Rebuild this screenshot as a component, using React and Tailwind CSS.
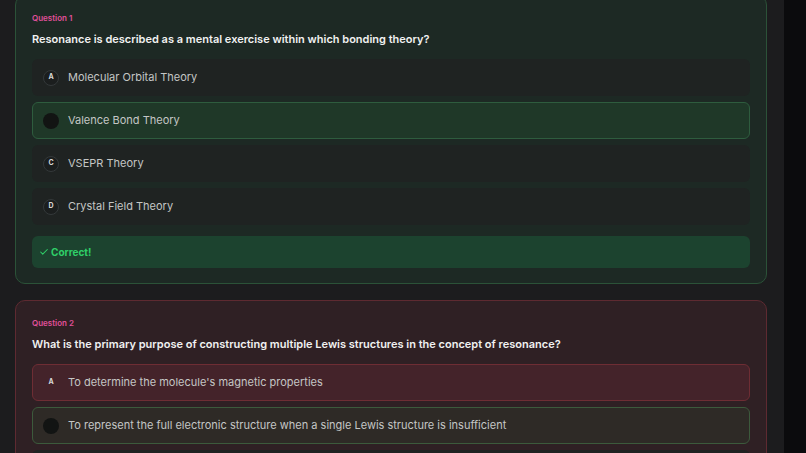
import { Check } from 'lucide-react';

const quiz = [
  {
    id: 1,
    status: 'correct',
    question: 'Resonance is described as a mental exercise within which bonding theory?',
    options: [
      { key: 'A', text: 'Molecular Orbital Theory', state: 'idle' },
      { key: 'B', text: 'Valence Bond Theory', state: 'right' },
      { key: 'C', text: 'VSEPR Theory', state: 'idle' },
      { key: 'D', text: 'Crystal Field Theory', state: 'idle' },
    ],
  },
  {
    id: 2,
    status: 'wrong',
    question:
      'What is the primary purpose of constructing multiple Lewis structures in the concept of resonance?',
    options: [
      { key: 'A', text: "To determine the molecule's magnetic properties", state: 'picked' },
      {
        key: 'B',
        text: 'To represent the full electronic structure when a single Lewis structure is insufficient',
        state: 'answer',
      },
      { key: 'C', text: 'To show the movement of atoms between forms', state: 'idle' },
    ],
  },
];

function Option({ opt }) {
  const box = {
    idle: 'border-transparent bg-[#1f2322]',
    right: 'border-[#2e5c3e] bg-[#1f3828]',
    picked: 'border-[#6e2d34] bg-[#44232a]',
    answer: 'border-[#3c5a3c] bg-[#2e2a26]',
  }[opt.state];

  return (
    <div className={`flex h-[37px] shrink-0 items-center gap-[9px] rounded-[6px] border pl-[10px] ${box}`}>
      {opt.state === 'right' || opt.state === 'answer' ? (
        <span className="h-4 w-4 rounded-full bg-[#121413]" />
      ) : opt.state === 'picked' ? (
        <span className="flex h-4 w-4 items-center justify-center text-[7px] font-bold text-[#d8d8d8]">
          {opt.key}
        </span>
      ) : (
        <span className="flex h-4 w-4 items-center justify-center rounded-full border border-[#34393a] bg-[#1b1e1e] text-[7px] font-bold text-[#d8d8d8]">
          {opt.key}
        </span>
      )}
      <span className="text-[11px] text-[#c4c6c5]">{opt.text}</span>
    </div>
  );
}

function QuestionCard({ item }) {
  const ok = item.status === 'correct';
  return (
    <div
      className={`flex shrink-0 flex-col rounded-[10px] border px-4 pt-4 pb-[15px] ${
        ok ? 'border-[#2b5238] bg-[#1d2924]' : 'border-[#5e2a31] bg-[#2f2024]'
      }`}
    >
      <div className="text-[8px] leading-[12px] font-semibold text-[#e0509a]">Question {item.id}</div>
      <div className="mt-[7px] text-[11px] leading-4 font-semibold text-[#f1f1f1]">{item.question}</div>
      <div className="mt-3 flex flex-col gap-[6px]">
        {item.options.map((o) => (
          <Option key={o.key} opt={o} />
        ))}
      </div>
      {ok && (
        <div className="mt-[11px] flex h-8 items-center gap-[2px] rounded-[6px] bg-[#1c432f] pl-[7px] text-[10px] font-bold text-[#2fcf68]">
          <Check size={10} strokeWidth={2.5} />
          Correct!
        </div>
      )}
    </div>
  );
}

export default function App() {
  return (
    <div
      className="flex h-[453px] w-[806px] overflow-hidden bg-[#1c1c1e]"
      style={{ fontFamily: 'Inter, "Noto Sans", sans-serif' }}
    >
      <div className="flex-1 overflow-hidden pl-[15px] pr-[17px]">
        <div className="-mt-[5px] flex flex-col gap-4">
          {quiz.map((q) => (
            <QuestionCard key={q.id} item={q} />
          ))}
        </div>
      </div>
      <div className="w-[22px] shrink-0 bg-[#0b0b0d]" />
    </div>
  );
}
